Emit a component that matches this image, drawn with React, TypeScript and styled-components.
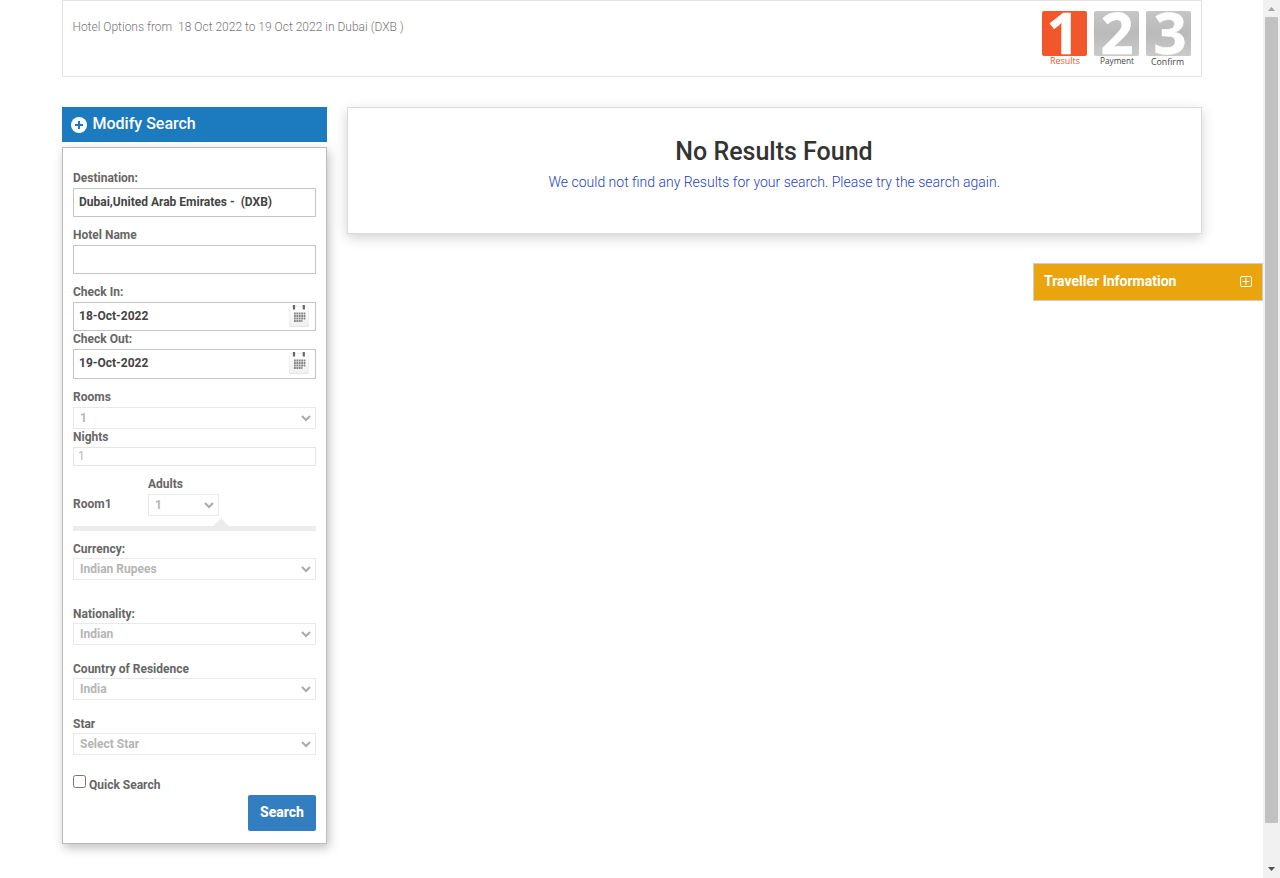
import React from 'react';
import styled, { createGlobalStyle } from 'styled-components';

const GlobalStyle = createGlobalStyle`
  * { box-sizing: border-box; }
  body {
    margin: 0;
    background: #fff;
    font-family: Roboto, "Liberation Sans", sans-serif;
    font-size: 12px;
    overflow: hidden;
  }
`;

const Page = styled.div`
  display: flex;
  height: 878px;
`;

const Content = styled.div`
  width: 1263px;
  padding: 0 61px 0 62px;
`;

const Summary = styled.header`
  display: flex;
  justify-content: space-between;
  height: 77px;
  padding: 10px 10px 0 9.4px;
  border: 1px solid #e2e2e2;
`;

const SummaryText = styled.p`
  margin: 7px 0 0;
  font-weight: 300;
  font-size: 12px;
  line-height: 18px;
  color: #777;
  white-space: pre;
`;

const Steps = styled.div`
  display: flex;
  gap: 7px;
`;

const StepArt = styled.svg`
  display: block;
  overflow: visible;
`;

const Columns = styled.div`
  display: flex;
  gap: 20px;
  margin-top: 30px;
`;

const Sidebar = styled.aside`
  width: 265px;
`;

const SidebarTitle = styled.div`
  display: flex;
  align-items: center;
  gap: 5.5px;
  height: 35px;
  padding: 0 9px;
  background: #1c7abf;
  color: #fff;
`;

const TitleText = styled.h2`
  margin: 0 0 2px;
  font-size: 16px;
  font-weight: 550;
  line-height: 20px;
`;

const Panel = styled.form`
  display: flex;
  flex-direction: column;
  height: 697px;
  margin-top: 5px;
  padding: 23px 10px 0;
  border: 1px solid #bbb;
  box-shadow: 2px 4px 10px rgba(0, 0, 0, 0.25);
`;

const Field = styled.div<{ $top?: number; $gap?: number }>`
  display: flex;
  flex-direction: column;
  gap: ${(p) => p.$gap ?? 3}px;
  margin-top: ${(p) => p.$top ?? 0}px;
`;

const Label = styled.label`
  font-weight: 700;
  line-height: 14px;
  color: #666;
`;

const TextBox = styled.div<{ $height?: number }>`
  display: flex;
  align-items: center;
  justify-content: space-between;
  height: ${(p) => p.$height ?? 29}px;
  padding: 0 5.5px 2px 5px;
  border: 1px solid #c4c4c4;
  color: #444;
  font-weight: 700;
  white-space: pre;
`;

const SelectBox = styled.div<{ $width?: number }>`
  display: flex;
  align-items: center;
  justify-content: space-between;
  width: ${(p) => (p.$width ? `${p.$width}px` : '100%')};
  height: 22px;
  padding: 0 4px 0 6px;
  border: 1px solid #e9e9e9;
  color: #b5b5b5;
  font-weight: 700;
  line-height: 14px;
`;

const NightsBox = styled.div`
  height: 19px;
  padding: 1px 4px;
  border: 1px solid #e6e6e6;
  color: #bbb;
  font-weight: 400;
  line-height: 14px;
`;

const RoomRow = styled.div`
  display: flex;
  align-items: flex-end;
  margin-top: 11px;
`;

const RoomName = styled.div`
  width: 75px;
  padding-bottom: 5px;
  color: #666;
  font-weight: 700;
  line-height: 14px;
`;

const RoomDivider = styled.svg`
  display: block;
  width: 243px;
  height: 13px;
  margin-top: 2px;
`;

const QuickRow = styled.div`
  display: flex;
  align-items: flex-start;
  gap: 3px;
  height: 20px;
  margin-top: 20px;
`;

const Checkbox = styled.input`
  width: 13px;
  height: 13px;
  margin: 0;
`;

const QuickLabel = styled(Label)`
  margin-top: 3px;
`;

const SearchButton = styled.button`
  align-self: flex-end;
  width: 68px;
  height: 36px;
  padding: 0 0 2px;
  border: 0;
  border-radius: 2px;
  background: #337dc1;
  color: #fff;
  font: 800 14px Roboto, sans-serif;
`;

const Main = styled.main`
  display: flex;
  flex-direction: column;
  width: 855px;
`;

const Notice = styled.section`
  height: 127px;
  padding-top: 29px;
  border: 1px solid #dadada;
  box-shadow: 0 4px 12px rgba(0, 0, 0, 0.18);
  text-align: center;
`;

const NoticeTitle = styled.h1`
  margin: 0 1px 0 0;
  font-size: 25px;
  font-weight: 500;
  line-height: 29px;
  color: #333;
`;

const NoticeText = styled.p`
  margin: 7px 0.5px 0 0;
  font-size: 14px;
  font-weight: 300;
  line-height: 18px;
  color: #1d3fbf;
`;

const Traveller = styled.div`
  display: flex;
  flex-shrink: 0;
  align-self: flex-end;
  align-items: center;
  justify-content: space-between;
  width: 230px;
  height: 38px;
  margin: 29px -61px 0 0;
  padding: 0 10px 2px;
  border: 1px solid #ccc;
  background: #eaa50e;
  color: #fff;
  font-size: 14px;
  font-weight: 750;
`;

const Scrollbar = styled.div`
  display: flex;
  flex-direction: column;
  justify-content: space-between;
  align-items: center;
  width: 17px;
  height: 878px;
  background: #f1f1f1;
`;

const ScrollArrow = styled.svg`
  display: block;
  width: 17px;
  height: 17px;
`;

const Thumb = styled.div`
  width: 13px;
  height: 806px;
  margin-bottom: auto;
  background: #c1c1c1;
`;

type StepProps = {
  digit: string;
  digitX: number;
  label: string;
  labelX: number;
  labelY: number;
  labelWidth: number;
  active?: boolean;
};

const Step = ({ digit, digitX, label, labelX, labelY, labelWidth, active }: StepProps) => (
  <StepArt width="45" height="60" viewBox="0 0 45 60">
    <defs>
      <linearGradient id={`step${digit}`} x1="0" y1="0" x2="0" y2="1">
        <stop offset="0" stopColor={active ? '#f2572b' : '#c6c6c6'} />
        <stop offset="0.5" stopColor={active ? '#f2572b' : '#bababa'} />
        <stop offset="1" stopColor={active ? '#f2572b' : '#cacaca'} />
      </linearGradient>
    </defs>
    <rect width="45" height="45" rx="2" fill={`url(#step${digit})`} />
    <text
      x={digitX}
      y="43"
      textAnchor="middle"
      fontFamily="Open Sans"
      fontWeight="700"
      fontSize="58"
      fill="#fff"
      stroke="#fff"
      strokeWidth="0.5"
    >
      {digit}
    </text>
    <text
      x={labelX}
      y={labelY}
      textAnchor="middle"
      fontFamily="Open Sans"
      fontSize="9"
      fontWeight="500"
      fill={active ? '#f2572b' : '#444'}
      textLength={labelWidth}
      lengthAdjust="spacingAndGlyphs"
    >
      {label}
    </text>
  </StepArt>
);

const Chevron = () => (
  <svg width="10" height="8" viewBox="0 0 10 8">
    <path d="M1 2l4 4 4-4" fill="none" stroke="#aaa" strokeWidth="2" />
  </svg>
);

const CalendarIcon = () => (
  <svg width="22" height="24" viewBox="0 0 22 24">
    <defs>
      <linearGradient id="calendar" x1="0" y1="0" x2="0" y2="1">
        <stop offset="0" stopColor="#fff" />
        <stop offset="1" stopColor="#f0f0f0" />
      </linearGradient>
    </defs>
    <rect x="1" y="4" width="20" height="19" rx="2" fill="#ddd" />
    <rect x="1.5" y="2.500" width="19" height="19.5" rx="2" fill="url(#calendar)" stroke="#efefef" />
    <path d="M6 1v4.500M15.800 1v4.500" stroke="#666" strokeWidth="2.2" />
    <path d="M6 9.500h12M6 12h12M6 14.500h12M6 17h8.500" stroke="#858585" strokeWidth="1.8" strokeDasharray="1.8 .6" />
  </svg>
);

const Select = ({ label, value, top, gap = 2 }: { label: string; value: string; top?: number; gap?: number }) => (
  <Field $top={top} $gap={gap}>
    <Label>{label}</Label>
    <SelectBox>
      {value}
      <Chevron />
    </SelectBox>
  </Field>
);

export default function App() {
  return (
    <>
      <GlobalStyle />
      <Page>
        <Content>
          <Summary>
            <SummaryText>{'Hotel Options from  18 Oct 2022 to 19 Oct 2022 in Dubai (DXB )'}</SummaryText>
            <Steps>
              <Step digit="1" digitX={21} label="Results" active labelX={23} labelY={53} labelWidth={30} />
              <Step digit="2" digitX={23} label="Payment" labelX={23} labelY={53} labelWidth={34} />
              <Step digit="3" digitX={24} label="Confirm" labelX={21.5} labelY={54} labelWidth={33} />
            </Steps>
          </Summary>
          <Columns>
            <Sidebar>
              <SidebarTitle>
                <svg width="16" height="16" viewBox="0 0 16 16">
                  <circle cx="8" cy="8" r="8" fill="#fff" />
                  <path d="M8 4v8M4 8h8" stroke="#1c7abf" strokeWidth="2" />
                </svg>
                <TitleText>Modify Search</TitleText>
              </SidebarTitle>
              <Panel>
                <Field>
                  <Label>Destination:</Label>
                  <TextBox>{'Dubai,United Arab Emirates -  (DXB)'}</TextBox>
                </Field>
                <Field $top={11}>
                  <Label>Hotel Name</Label>
                  <TextBox />
                </Field>
                <Field $top={11}>
                  <Label>Check In:</Label>
                  <TextBox>
                    18-Oct-2022
                    <CalendarIcon />
                  </TextBox>
                </Field>
                <Field $top={1}>
                  <Label>Check Out:</Label>
                  <TextBox $height={30}>
                    19-Oct-2022
                    <CalendarIcon />
                  </TextBox>
                </Field>
                <Select label="Rooms" value="1" top={11} gap={3} />
                <Field $top={1}>
                  <Label>Nights</Label>
                  <NightsBox>1</NightsBox>
                </Field>
                <RoomRow>
                  <RoomName>Room1</RoomName>
                  <Field>
                    <Label>Adults</Label>
                    <SelectBox $width={71}>
                      1
                      <Chevron />
                    </SelectBox>
                  </Field>
                </RoomRow>
                <RoomDivider viewBox="0 0 243 13">
                  <path d="M0 8h140.500l7.500-8 7.500 8H243v5H0z" fill="#ececec" />
                </RoomDivider>
                <Select label="Currency:" value="Indian Rupees" top={11} />
                <Select label="Nationality:" value="Indian" top={27} />
                <Select label="Country of Residence" value="India" top={17} />
                <Select label="Star" value="Select Star" top={17} />
                <QuickRow>
                  <Checkbox type="checkbox" id="quick" />
                  <QuickLabel htmlFor="quick">Quick Search</QuickLabel>
                </QuickRow>
                <SearchButton type="button">Search</SearchButton>
              </Panel>
            </Sidebar>
            <Main>
              <Notice>
                <NoticeTitle>No Results Found</NoticeTitle>
                <NoticeText>We could not find any Results for your search. Please try the search again.</NoticeText>
              </Notice>
              <Traveller>
                Traveller Information
                <svg width="12" height="11" viewBox="0 0 12 11">
                  <rect x="0.5" y="0.5" width="11" height="10" rx="1.500" fill="none" stroke="#fff" />
                  <path d="M6 2v7M2.500 5.500h7" stroke="#fff" />
                </svg>
              </Traveller>
            </Main>
          </Columns>
        </Content>
        <Scrollbar>
          <ScrollArrow viewBox="0 0 17 17">
            <path d="M5 11h7L8.500 7z" fill="#a3a3a3" />
          </ScrollArrow>
          <Thumb />
          <ScrollArrow viewBox="0 0 17 17">
            <path d="M5 6h7l-3.500 4z" fill="#505050" />
          </ScrollArrow>
        </Scrollbar>
      </Page>
    </>
  );
}
